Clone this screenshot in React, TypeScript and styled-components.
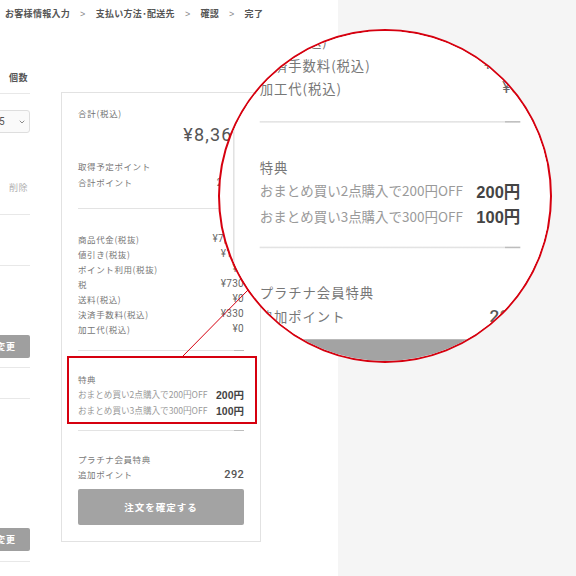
import React from "react";
import styled, { createGlobalStyle, css } from "styled-components";
import { ChevronDown } from "lucide-react";

const GlobalStyle = createGlobalStyle`
  *, *::before, *::after {
    box-sizing: border-box;
  }
  html, body {
    margin: 0;
    padding: 0;
    background: #fff;
  }
  body {
    font-family: "Noto Sans CJK JP", "Noto Sans", sans-serif;
    color: #555;
  }
`;

const Page = styled.div`
  position: relative;
  display: flex;
  width: 576px;
  height: 576px;
  overflow: hidden;
`;

const Main = styled.div`
  width: 338px;
  flex-shrink: 0;
  background: #fff;
`;

const Aside = styled.div`
  flex: 1;
  background: #f5f5f5;
`;

const Breadcrumb = styled.nav`
  display: flex;
  align-items: center;
  gap: 10px;
  height: 27px;
  padding-left: 5px;
  font-size: 9px;
  font-weight: 700;
  letter-spacing: 0.3px;
  color: #555;
  white-space: nowrap;
`;

const CrumbSep = styled.span`
  font-family: "Liberation Sans", sans-serif;
  font-weight: 400;
  color: #888;
`;

const Content = styled.div`
  display: flex;
  gap: 31px;
`;

/* cart list, only its right edge is on screen */
const CartColumn = styled.div`
  width: 30px;
  flex-shrink: 0;
  overflow: hidden;
  padding-top: 44px;
`;

const CartTrack = styled.div`
  display: flex;
  flex-direction: column;
  align-items: flex-end;
  width: 120px;
  margin-left: -90px;
`;

const ColumnHead = styled.div`
  width: 100%;
  height: 23px;
  padding-right: 2px;
  line-height: 13px;
  text-align: right;
  font-size: 9px;
  font-weight: 700;
  letter-spacing: 0.5px;
  color: #555;
  border-bottom: 1px solid #e8e8e8;
`;

const QtySelect = styled.div`
  display: flex;
  align-items: center;
  justify-content: space-between;
  width: 40px;
  height: 23px;
  margin-top: 16px;
  padding: 0 3px 0 8px;
  font-family: Roboto, sans-serif;
  font-size: 10px;
  color: #555;
  background: #fafafa;
  border: 1px solid #dedede;
  border-radius: 3px;
`;

const RemoveLink = styled.span`
  margin-top: 48px;
  padding-right: 2px;
  line-height: 13px;
  font-size: 9px;
  letter-spacing: 0.5px;
  color: #b0b0b0;
`;

const CartRule = styled.div<{ $top: number }>`
  width: 100%;
  height: 1px;
  margin-top: ${(p) => p.$top}px;
  background: #e8e8e8;
`;

const ChangeButton = styled.button<{ $top: number }>`
  width: 48px;
  height: 23px;
  margin-top: ${(p) => p.$top}px;
  padding: 0;
  border: 0;
  border-radius: 2px;
  background: #9f9f9f;
  color: #fff;
  font-family: inherit;
  font-size: 9px;
  font-weight: 700;
  letter-spacing: 1px;
`;

/* order summary */
const Card = styled.section<{ $lens?: boolean }>`
  align-self: flex-start;
  width: 200px;
  margin-top: 65px;
  padding: 14px 16px 16px;
  background: #fff;
  border: 1px solid #e2e2e2;
  ${(p) =>
    p.$lens &&
    css`
      margin-top: 0;
      border-top-color: transparent;
      border-right-color: transparent;
    `}
`;

const TotalLabel = styled.div`
  height: 13px;
  line-height: 13px;
  font-size: 8.5px;
  letter-spacing: 0.7px;
  color: #707070;
`;

const TotalAmount = styled.div`
  margin-top: 3px;
  line-height: 24px;
  text-align: right;
  font-family: Roboto, sans-serif;
  font-size: 18px;
  letter-spacing: 1.2px;
  color: #555;
`;

const Group = styled.div<{ $top: number }>`
  margin-top: ${(p) => p.$top}px;
`;

const Line = styled.div<{ $h?: number }>`
  display: flex;
  align-items: center;
  justify-content: space-between;
  height: ${(p) => p.$h ?? 15}px;
`;

const Label = styled.span`
  font-size: 8.5px;
  letter-spacing: 0.6px;
  color: #777;
`;

const Value = styled.span<{ $strong?: boolean }>`
  font-family: Roboto, "Noto Sans CJK JP", sans-serif;
  font-size: 10px;
  letter-spacing: 0.3px;
  color: #666;
  ${(p) =>
    p.$strong &&
    css`
      font-size: 11px;
      font-weight: 500;
      color: #555;
    `}
`;

const PerkLabel = styled.span`
  font-size: 8.6px;
  color: #9a9a9a;
`;

const PerkValue = styled.span`
  font-family: "Liberation Sans", "Noto Sans CJK JP", sans-serif;
  font-size: 10.5px;
  font-weight: 700;
  color: #444;
`;

const Rule = styled.div<{ $top: number }>`
  height: 1px;
  margin-top: ${(p) => p.$top}px;
  background: linear-gradient(to right, #e3e3e3 calc(100% - 10px), #bdbdbd 0);
`;

const ConfirmButton = styled.button`
  display: block;
  width: 100%;
  height: 36px;
  margin-top: 7px;
  border: 0;
  border-radius: 2px;
  background: #a3a3a3;
  color: #fff;
  font-family: inherit;
  font-size: 9.5px;
  font-weight: 700;
  letter-spacing: 1px;
`;

/* overlays: highlight, connector and magnifier */
const Highlight = styled.div`
  position: absolute;
  left: 67px;
  top: 356px;
  width: 190px;
  height: 68px;
  border: 2px solid #d6000f;
`;

const Connector = styled.svg`
  position: absolute;
  left: 180px;
  top: 286px;
  width: 72px;
  height: 72px;
  overflow: visible;
`;

const Lens = styled.div`
  position: absolute;
  left: 218px;
  top: 29px;
  width: 334px;
  height: 334px;
  border: 2px solid #d6000f;
  border-radius: 50%;
  background: #fff;
  overflow: hidden;
`;

const LensStage = styled.div`
  position: absolute;
  left: 13.3px;
  top: -315px;
  transform: scale(1.57);
  transform-origin: 0 0;
`;

const priceRows: [string, string][] = [
  ["商品代金(税抜)", "¥7,400"],
  ["値引き(税抜)", "¥100"],
  ["ポイント利用(税抜)", "¥0"],
  ["税", "¥730"],
  ["送料(税込)", "¥0"],
  ["決済手数料(税込)", "¥330"],
  ["加工代(税込)", "¥0"],
];

const perks: [string, string][] = [
  ["おまとめ買い2点購入で200円OFF", "200円"],
  ["おまとめ買い3点購入で300円OFF", "100円"],
];

const Summary = ({ lens = false }: { lens?: boolean }) => (
  <Card $lens={lens} aria-hidden={lens || undefined}>
    <TotalLabel>合計(税込)</TotalLabel>
    <TotalAmount>¥8,360</TotalAmount>
    <Group $top={11}>
      <Line $h={16}>
        <Label>取得予定ポイント</Label>
        <Value>73pt</Value>
      </Line>
      <Line $h={16}>
        <Label>合計ポイント</Label>
        <Value>292pt</Value>
      </Line>
    </Group>
    <Rule $top={18} />
    <Group $top={22}>
      {priceRows.map(([label, value]) => (
        <Line key={label}>
          <Label>{label}</Label>
          <Value>{value}</Value>
        </Line>
      ))}
    </Group>
    <Rule $top={14} />
    <Group $top={20}>
      <Line>
        <Label>特典</Label>
      </Line>
      {perks.map(([label, value]) => (
        <Line key={label} $h={16}>
          <PerkLabel>{label}</PerkLabel>
          <PerkValue>{value}</PerkValue>
        </Line>
      ))}
    </Group>
    <Rule $top={12} />
    <Group $top={20}>
      <Line>
        <Label>プラチナ会員特典</Label>
      </Line>
      <Line $h={16}>
        <Label>追加ポイント</Label>
        <Value $strong>292</Value>
      </Line>
    </Group>
    <ConfirmButton>注文を確定する</ConfirmButton>
  </Card>
);

const steps = ["お客様情報入力", "支払い方法･配送先", "確認", "完了"];

export default function App() {
  return (
    <>
      <GlobalStyle />
      <Page>
        <Main>
          <Breadcrumb>
            {steps.map((step, i) => (
              <React.Fragment key={step}>
                {i > 0 && <CrumbSep>&gt;</CrumbSep>}
                <span>{step}</span>
              </React.Fragment>
            ))}
          </Breadcrumb>
          <Content>
            <CartColumn>
              <CartTrack>
                <ColumnHead>個数</ColumnHead>
                <QtySelect>
                  <span>5</span>
                  <ChevronDown size={8} strokeWidth={2} color="#555" />
                </QtySelect>
                <RemoveLink>削除</RemoveLink>
                <CartRule $top={20} />
                <CartRule $top={50} />
                <ChangeButton $top={69}>変更</ChangeButton>
                <CartRule $top={9} />
                <CartRule $top={30} />
                <ChangeButton $top={129}>変更</ChangeButton>
                <CartRule $top={10} />
              </CartTrack>
            </CartColumn>
            <Summary />
          </Content>
        </Main>
        <Aside />
        <Highlight />
        <Connector viewBox="0 0 72 72">
          <line x1="3" y1="70" x2="68" y2="4" stroke="#d6000f" strokeWidth="1" />
        </Connector>
        <Lens>
          <LensStage>
            <Summary lens />
          </LensStage>
        </Lens>
      </Page>
    </>
  );
}
